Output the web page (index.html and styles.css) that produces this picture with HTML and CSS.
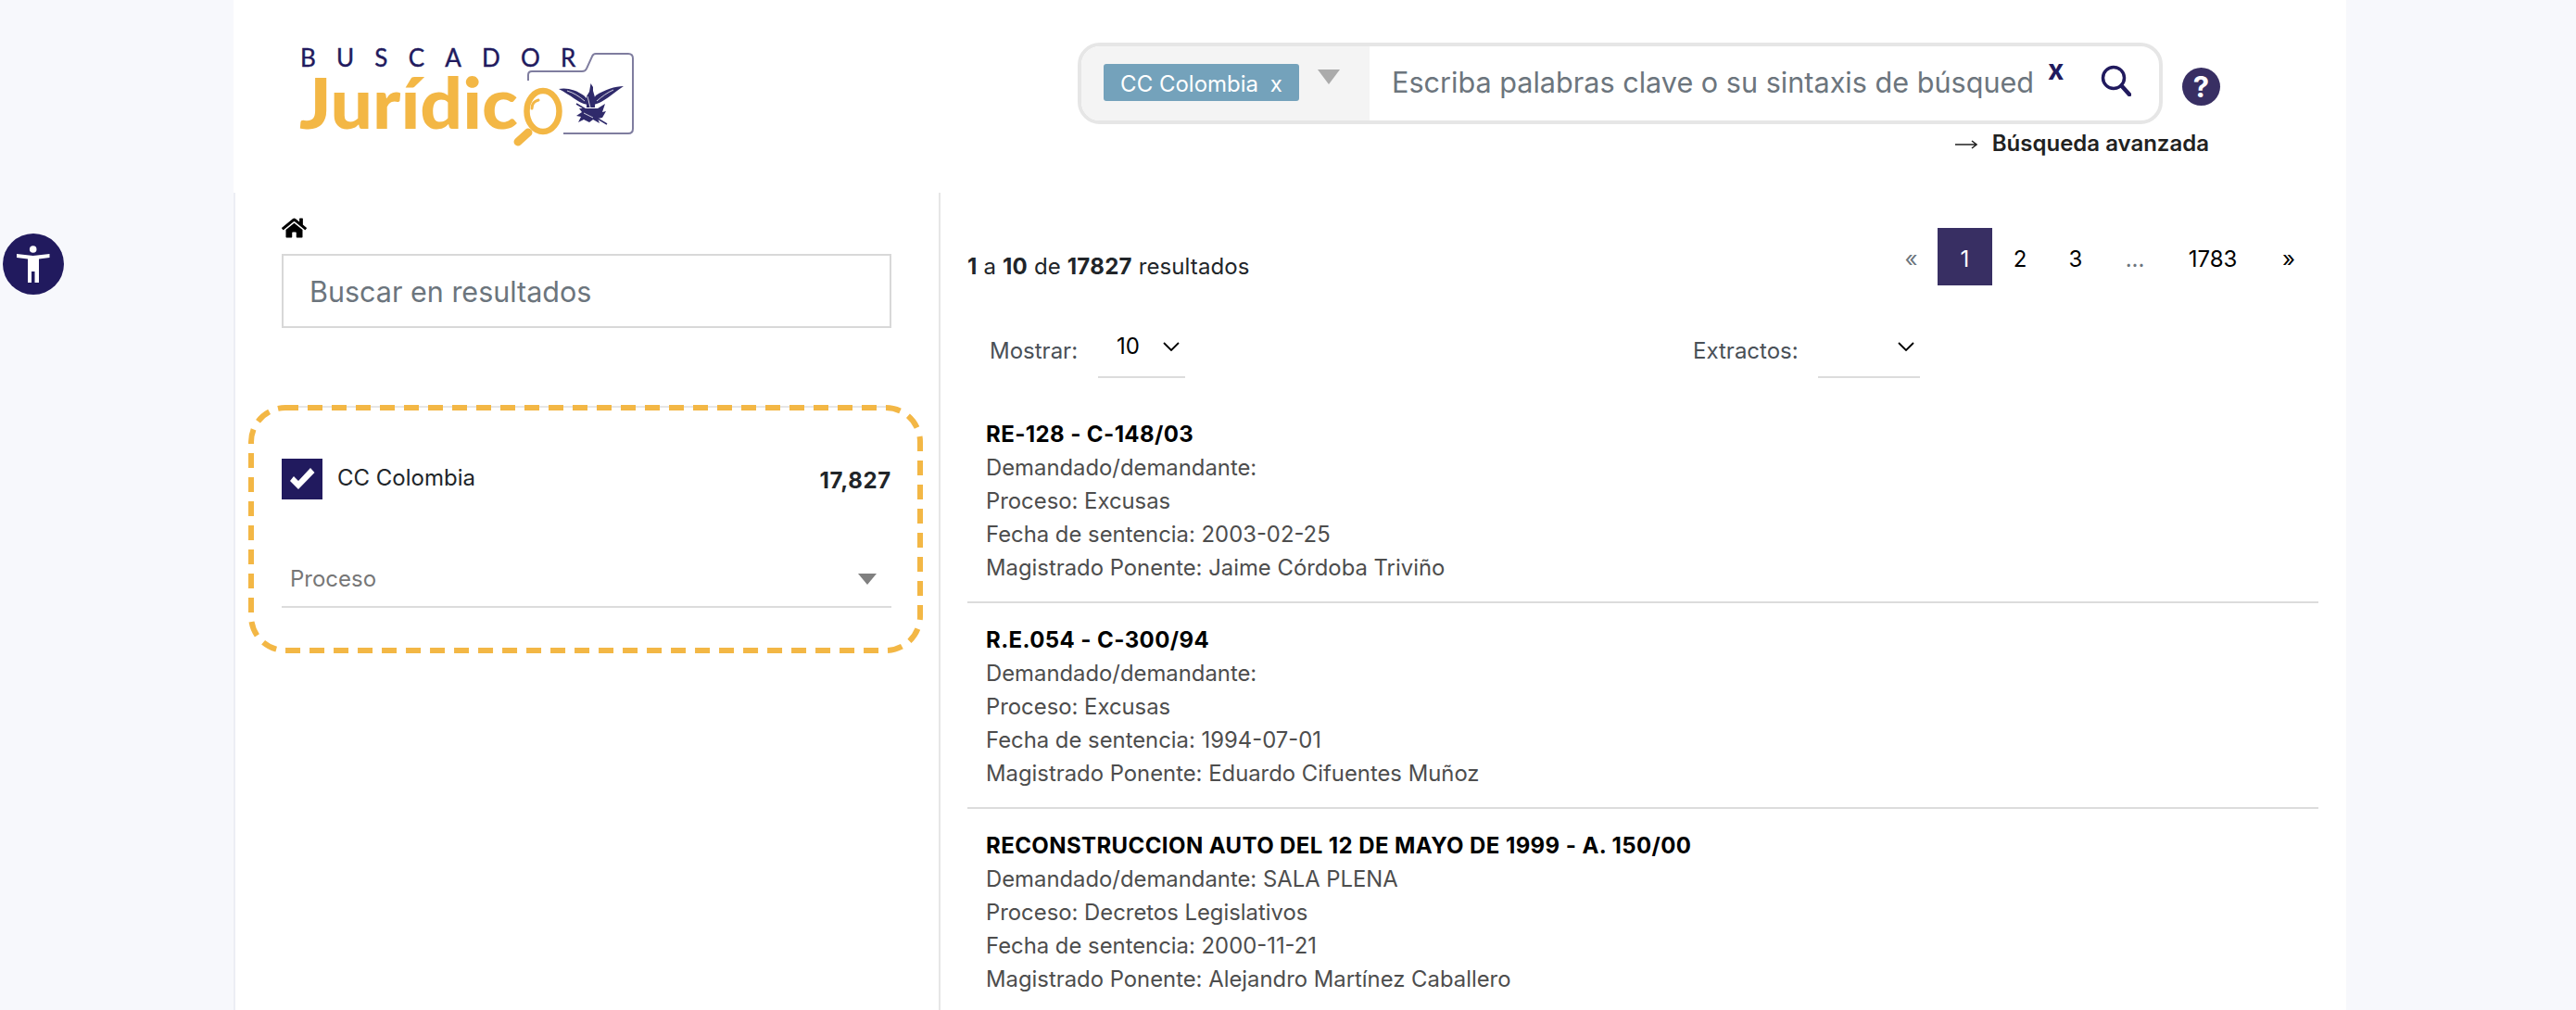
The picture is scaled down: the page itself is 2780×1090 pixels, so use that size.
FILE: index.html
```html
<!DOCTYPE html>
<html lang="es">
<head>
<meta charset="utf-8">
<title>Buscador Jurídico</title>
<link rel="stylesheet" href="styles.css">
</head>
<body>
<button class="a11y" aria-label="Accesibilidad">
  <svg class="a11y-icon" viewBox="0 0 66 66"><circle cx="32.700" cy="17" r="3.800"/><path d="M15 22L32.700 24L50.500 22V26L39 27.500V53H34.500V41H31V53H27V27.500L15 26z"/></svg>
</button>
<div class="page">
  <header class="header">
    <a class="logo" href="#">
      <svg class="logo-svg" viewBox="320 45 370 120">
        <text class="logo-top" x="324" y="72">BUSCADOR</text>
        <text class="logo-main" x="323" y="139" textLength="236" lengthAdjust="spacingAndGlyphs">Jurídic</text>
        <ellipse class="lens" cx="586" cy="120" rx="17.500" ry="22"/>
        <path class="lens-handle" d="M570 143L559 153"/>
        <path class="lens-shine" d="M574 117c0-5 3-8 7-9"/>
        <path class="folder" d="M570 87V81q0-4 4-4H628q4 0 5-3L639 61q1-3 4-3H678q5 0 5 5V139q0 5-5 5H608"/>
        <path class="eagle" d="M603 96C611 94 622 97 630 103L634 107V113L630 112C624 110 616 103 603 96Z"/>
        <path class="eagle" d="M673 93C664 93 652 97 643 103L641 106V113L644 112C651 110 660 102 673 93Z"/>
        <path class="eagle" d="M637.500 90L640 94V98L642 105V116H633V104L636 99Z"/>
        <path class="eagle" d="M632 117L645 117L653 112L650 121L654 120L650 127L645 128L647 133L640 129L636 132L630 129L624 132L627 126L622 125L628 121L625 117Z"/>
        <path class="eagle-line" d="M622 112L632 118M640 125L655 134"/>
        <path class="eagle-gap" d="M612 98C619 100 625 104 631 109M662 97C655 100 650 104 644 109M634 104L637 116M630 122L640 127"/>
      </svg>
    </a>
    <div class="search-area">
      <div class="search-row">
        <div class="search-box">
          <div class="search-scope">
            <span class="tag">CC Colombia <span class="tag-x">x</span></span>
            <span class="tri tri-light"></span>
          </div>
          <input class="search-input" type="text" placeholder="Escriba palabras clave o su sintaxis de búsqueda">
          <span class="clear">x</span>
          <svg class="search-icon" viewBox="0 0 33 34"><circle cx="14" cy="14" r="11.500"/><path d="M22.500 22.500L31 32"/></svg>
        </div>
        <span class="help">?</span>
      </div>
      <a class="advanced" href="#"><svg class="arrow" viewBox="0 0 24 10"><path d="M0 5H23M18 1l5 4-5 4"/></svg>Búsqueda avanzada</a>
    </div>
  </header>
  <div class="content">
    <aside class="side">
      <svg class="home" viewBox="0 0 576 512"><path d="M280.370 148.260L96 300.110V464a16 16 0 0 0 16 16l112.060-.29a16 16 0 0 0 15.920-16V368a16 16 0 0 1 16-16h64a16 16 0 0 1 16 16v95.640a16 16 0 0 0 16 16.050L464 480a16 16 0 0 0 16-16V300L295.670 148.260a12.190 12.190 0 0 0-15.300 0zM571.600 251.470L488 182.560V44.050a12 12 0 0 0-12-12h-56a12 12 0 0 0-12 12v72.610L318.470 43a48 48 0 0 0-61 0L4.340 251.470a12 12 0 0 0-1.600 16.900l25.500 31A12 12 0 0 0 45.150 301l235.220-193.740a12.190 12.190 0 0 1 15.300 0L530.900 301a12 12 0 0 0 16.900-1.600l25.500-31a12 12 0 0 0-1.700-16.930z"/></svg>
      <input class="side-search" type="text" placeholder="Buscar en resultados">
      <section class="filters">
        <svg class="dash" viewBox="0 0 728 268"><path class="dash-top" d="M40 2H688"/><rect class="dash-line" x="3" y="3" width="722" height="262" rx="37"/></svg>
        <div class="filter-row">
          <span class="check"><svg viewBox="0 0 44 44"><path d="M9 24L13 19L18 24L31 10L35.500 15L18 33Z"/></svg></span>
          <span class="filter-name">CC Colombia</span>
          <b class="filter-count">17,827</b>
        </div>
        <div class="filter-select">
          <span>Proceso</span>
          <span class="tri tri-dark"></span>
        </div>
      </section>
    </aside>
    <main class="results">
      <div class="topbar">
        <p class="count"><b>1</b> a <b>10</b> de <b>17827</b> resultados</p>
        <nav class="pager">
          <span class="pg pg-prev">«</span>
          <span class="pg pg-on">1</span>
          <span class="pg">2</span>
          <span class="pg">3</span>
          <span class="pg pg-dots">...</span>
          <span class="pg pg-last">1783</span>
          <span class="pg pg-next">»</span>
        </nav>
      </div>
      <div class="options">
        <div class="opt opt-show">
          <span class="opt-label label-show">Mostrar:</span>
          <div class="opt-select sel-show"><span>10</span><svg class="chev" viewBox="0 0 18 10"><path d="M1 1l8 8 8-8"/></svg></div>
        </div>
        <div class="opt">
          <span class="opt-label label-ext">Extractos:</span>
          <div class="opt-select sel-ext"><span></span><svg class="chev" viewBox="0 0 18 10"><path d="M1 1l8 8 8-8"/></svg></div>
        </div>
      </div>
      <article class="item">
        <h2>RE-128 - C-148/03</h2>
        <p>Demandado/demandante:</p>
        <p>Proceso: Excusas</p>
        <p>Fecha de sentencia: 2003-02-25</p>
        <p>Magistrado Ponente: Jaime Córdoba Triviño</p>
      </article>
      <article class="item">
        <h2>R.E.054 - C-300/94</h2>
        <p>Demandado/demandante:</p>
        <p>Proceso: Excusas</p>
        <p>Fecha de sentencia: 1994-07-01</p>
        <p>Magistrado Ponente: Eduardo Cifuentes Muñoz</p>
      </article>
      <article class="item">
        <h2>RECONSTRUCCION AUTO DEL 12 DE MAYO DE 1999 - A. 150/00</h2>
        <p>Demandado/demandante: SALA PLENA</p>
        <p>Proceso: Decretos Legislativos</p>
        <p>Fecha de sentencia: 2000-11-21</p>
        <p>Magistrado Ponente: Alejandro Martínez Caballero</p>
      </article>
    </main>
  </div>
</div>
</body>
</html>
```
FILE: styles.css
```css
* { box-sizing: border-box; }
html, body { margin: 0; height: 1090px; overflow: hidden; }
body { background: #f7f8fc; font-family: Inter, "Liberation Sans", sans-serif; font-size: 24px; line-height: 36px; color: #212529; }
a { color: inherit; text-decoration: none; }

.a11y { position: absolute; left: 3px; top: 252px; width: 66px; height: 66px; padding: 0; border: 0; border-radius: 50%; background: #211a5e; }
.a11y-icon { display: block; width: 66px; height: 66px; fill: #fff; }

.page { width: 2280px; height: 1090px; margin-left: 252px; background: #fff; display: flex; flex-direction: column; }

.header { height: 208px; display: flex; padding-left: 68px; flex: none; }
.logo { margin-top: 45px; width: 370px; height: 120px; flex: none; }
.logo-svg { display: block; width: 370px; height: 120px; }
.logo-top { font-family: "Lato", sans-serif; font-size: 26px; font-weight: 400; letter-spacing: 22.200px; fill: #211a5e; stroke: #211a5e; stroke-width: .4; }
.logo-main { font-family: "Lato", sans-serif; font-size: 76px; font-weight: 900; fill: #f3b745; }
.lens { fill: none; stroke: #f3b745; stroke-width: 6.500; }
.lens-handle { fill: none; stroke: #f3b745; stroke-width: 9; stroke-linecap: round; }
.lens-shine { fill: none; stroke: #f3b745; stroke-width: 3; stroke-linecap: round; }
.folder { fill: none; stroke: #7f7d9f; stroke-width: 2; }
.eagle { fill: #2f2a6b; }
.eagle-line { fill: none; stroke: #2f2a6b; stroke-width: 1.500; }
.eagle-gap { fill: none; stroke: #fff; stroke-width: .8; }

.search-area { margin-left: 473px; padding-top: 46px; width: 1233px; display: flex; flex-direction: column; }
.search-row { display: flex; align-items: flex-start; }
.search-box { width: 1172px; height: 88px; border: 4px solid #e6e6e6; border-radius: 24px; display: flex; overflow: hidden; position: relative; }
.search-scope { width: 311px; flex: none; background: #f4f4f4; display: flex; align-items: flex-start; padding: 19px 0 0 24px; }
.tag { width: 211px; height: 40px; background: #74a2bb; border-radius: 3px; color: #fff; font-size: 24px; line-height: 43px; text-align: center; }
.tag-x { margin-left: 6px; }
.tri { display: block; width: 0; height: 0; border-style: solid; border-color: transparent; border-bottom-width: 0; }
.tri-light { margin: 6px 0 0 20px; border-width: 16px 12px 0; border-top-color: #ababab; }
.tri-dark { border-width: 12px 10px 0; border-top-color: #808080; }
.search-input { width: 716px; flex: none; border: 0; outline: 0; padding: 0 0 0 24px; height: 76px; font: 30.600px/44px Inter, "Liberation Sans", sans-serif; background: #fff; }
.search-input::placeholder, .side-search::placeholder { color: #6c757d; opacity: 1; }
.clear { margin: 9px 0 0 16px; color: #211a5e; font-weight: 700; font-size: 30px; line-height: 32px; }
.search-icon { margin: 20px 0 0 40px; width: 33px; height: 34px; fill: none; stroke: #211a5e; stroke-width: 3.500; }
.search-icon path { stroke-width: 4.500; stroke-linecap: round; }
.help { margin: 27px 0 0 21px; width: 41px; height: 41px; border-radius: 50%; background: #382f63; color: #fff; font-weight: 700; font-size: 31px; line-height: 41px; text-align: center; }
.advanced { align-self: flex-end; margin: 3px 12px 0 0; font-weight: 600; color: #212121; display: flex; }
.arrow { margin: 14px 16px 0 0; width: 24px; height: 10px; fill: none; stroke: #212121; stroke-width: 1.500; }

.content { flex: 1; display: flex; min-height: 0; }
.side { width: 761px; flex: none; border-left: 2px solid #eceef4; padding: 26px 51px 0 50px; }
.home { display: block; width: 27px; height: 24px; fill: #000; }
.side-search { display: block; width: 100%; height: 80px; margin-top: 16px; border: 2px solid #d8d8d8; padding: 1px 0 0 28px; outline: 0; font: 30.500px/44px Inter, "Liberation Sans", sans-serif; background: #fff; }
.filters { position: relative; margin: 83px -34px 0 -36px; height: 268px; padding: 58px 34px 0 36px; }
.dash { position: absolute; left: 0; top: 0; width: 728px; height: 268px; fill: none; }
.dash-top { stroke: #e6e6e6; stroke-width: 2; }
.dash-line { stroke: #f3b745; stroke-width: 6; stroke-dasharray: 16 10; stroke-dashoffset: 2; }
.filter-row { display: flex; align-items: flex-start; height: 44px; position: relative; }
.check { width: 44px; height: 44px; background: #211a5e; flex: none; }
.check svg { display: block; width: 44px; height: 44px; fill: #fff; }
.filter-name { margin: 3px 0 0 16px; flex: 1; line-height: 36px; color: #212529; }
.filter-count { margin-top: 6px; font-weight: 700; letter-spacing: .7px; color: #212529; }
.filter-select { position: relative; margin-top: 57px; height: 60px; border-bottom: 2px solid #dcdcdc; display: flex; justify-content: space-between; align-items: center; padding: 0 16px 0 9px; color: #777; }

.results { flex: 1; border-left: 2px solid #e6e6e6; padding: 38px 30px 0 29px; min-width: 0; }
.topbar { display: flex; justify-content: space-between; align-items: center; height: 62px; }
.count { margin: 21px 0 0; letter-spacing: .1px; }
.count b { font-weight: 700; letter-spacing: .3px; }
.pager { display: flex; height: 62px; }
.pg { min-width: 60px; display: flex; align-items: center; justify-content: center; padding-top: 6px; color: #000; }
.pg-prev { width: 57px; min-width: 57px; color: #6c757d; }
.pg-on { width: 59px; min-width: 59px; background: #382f63; color: #fff; }
.pg-dots { width: 68px; color: #6c757d; }
.pg-last { width: 100px; }
.pg-next { width: 64px; }
.options { display: flex; padding-left: 24px; margin-top: 42px; }
.opt { display: flex; align-items: center; height: 58px; }
.opt-show { width: 759px; }
.opt-label { color: #495057; }
.label-show { width: 117px; }
.label-ext { width: 135px; }
.opt-select { height: 58px; border-bottom: 2px solid #dcdcdc; display: flex; justify-content: space-between; padding-top: 6px; color: #000; }
.sel-show { width: 94px; padding-left: 20px; padding-right: 6px; }
.sel-ext { width: 110px; padding-right: 6px; }
.chev { width: 18px; height: 10px; margin-top: 13px; fill: none; stroke: #000; stroke-width: 1.800; }
.item { padding: 22px 0 18px 20px; border-bottom: 2px solid #dcdcdc; }
.options + .item { margin-top: 21px; }
.item h2 { margin: 0; font-size: 24px; line-height: 36px; font-weight: 700; letter-spacing: .4px; color: #000; }
.item p { margin: 0; font-size: 23.850px; color: #4d4d4d; }
```
